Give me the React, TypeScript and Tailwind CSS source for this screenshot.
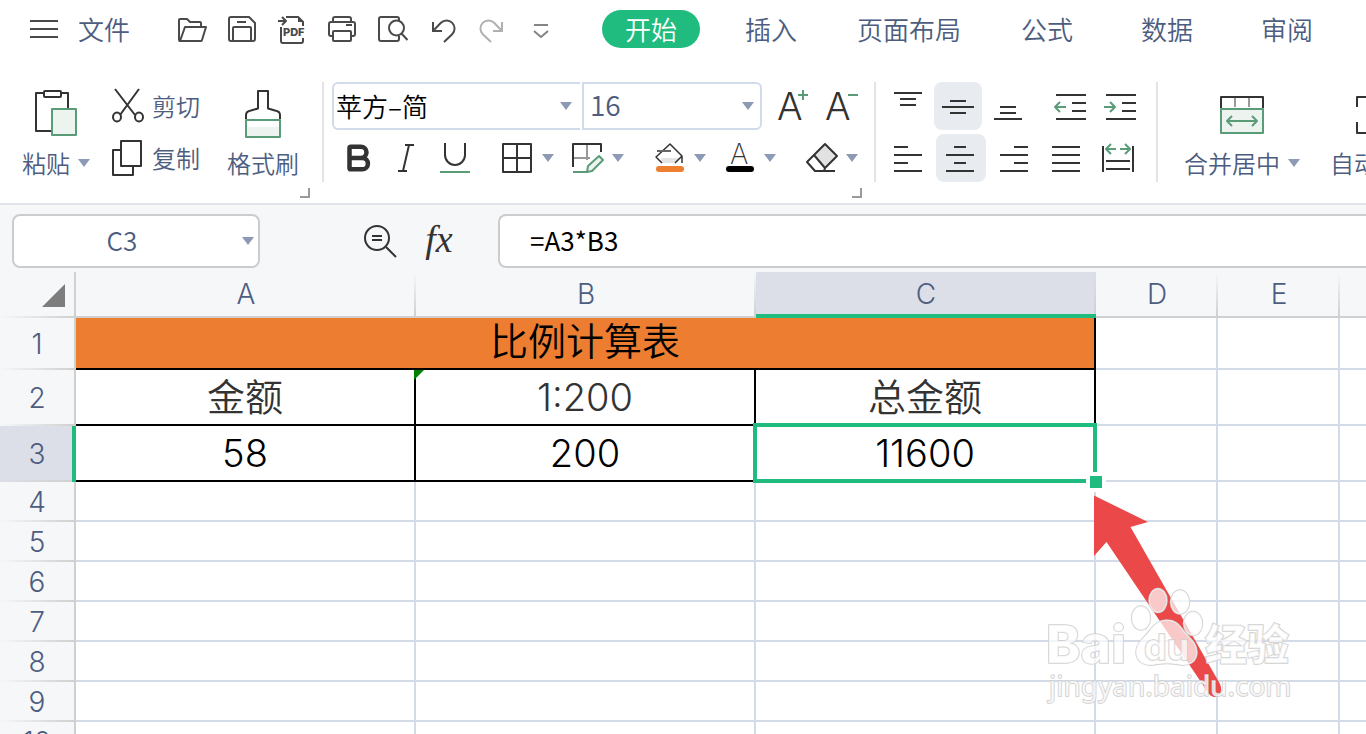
import type { ReactNode } from 'react';
import { Bold } from 'lucide-react';
import clsx from 'clsx';

const TABS = ['开始', '插入', '页面布局', '公式', '数据', '审阅'];
const COLUMNS = ['A', 'B', 'C', 'D', 'E', 'F'];
const EMPTY_ROWS = [4, 5, 6, 7, 8, 9, 10];

const INK = '#333333';
const GREEN = '#5a9c78';
const MINT = '#edf3ef';

interface IconProps {
  w?: number;
  h?: number;
  color?: string;
  children: ReactNode;
}

function Icon({ w = 32, h = 32, color = INK, children }: IconProps) {
  return (
    <svg
      width={w}
      height={h}
      viewBox={`0 0 ${w} ${h}`}
      fill="none"
      stroke={color}
      strokeWidth={2}
      strokeLinejoin="round"
      className="shrink-0 overflow-visible"
      aria-hidden="true"
    >
      {children}
    </svg>
  );
}

function Caret() {
  return (
    <svg width="12" height="8" viewBox="0 0 12 8" className="shrink-0" aria-hidden="true">
      <path d="M0 0h12L6 8z" fill="#8d9ab6" />
    </svg>
  );
}

function Divider() {
  return <div className="w-0.5 h-[100px] shrink-0 bg-[#e4e4e6]" />;
}

function GroupCorner() {
  return (
    <span className="absolute right-3 -bottom-4 size-2.5 border-r-2 border-b-2 border-[#9a9a9a]" />
  );
}

interface ToolProps {
  label: string;
  caret?: boolean;
  children: ReactNode;
}

function Tool({ label, caret, children }: ToolProps) {
  return (
    <button type="button" aria-label={label} className="flex items-center gap-2 h-12 shrink-0">
      <span className="flex w-8 items-center justify-center">{children}</span>
      {caret && <Caret />}
    </button>
  );
}

function BigTool({ label, caret, children }: ToolProps) {
  return (
    <button type="button" className="flex flex-col items-center gap-3 pt-1.5 shrink-0">
      {children}
      <span className="flex items-center gap-2 text-2xl leading-[26px] whitespace-nowrap">
        {label}
        {caret && <Caret />}
      </span>
    </button>
  );
}

interface AlignToolProps {
  label: string;
  active?: boolean;
  wide?: boolean;
  children: ReactNode;
}

function AlignTool({ label, active, wide, children }: AlignToolProps) {
  return (
    <button
      type="button"
      aria-label={label}
      className={clsx(
        'flex h-12 shrink-0 items-center justify-center rounded-lg',
        wide ? 'w-[50px]' : 'w-12',
        active && 'bg-[#e8ebf0]'
      )}
    >
      {children}
    </button>
  );
}

const undoPath = 'M7 9v9h9M7 18L14.9 9.8A8 8 0 1 1 26.2 21.2L18 29';

function TopBar() {
  return (
    <header className="flex h-[58px] items-center pl-[30px]">
      <button type="button" className="flex items-center gap-5 shrink-0 text-[26px] leading-8">
        <Icon w={28} h={20} color="#4a4a4a">
          <path d="M0 2h28M0 10h28M0 18h28" />
        </Icon>
        文件
      </button>

      <div className="flex gap-[18px] pl-[46px] shrink-0">
        <button type="button" aria-label="打开">
          <Icon color="#4a4a4a">
            <path d="M4 28a1 1 0 0 1-1-1V7a1 1 0 0 1 1-1h7l3 3h10a1 1 0 0 1 1 1v4" />
            <path d="M9 14h21l-4 13a1 1 0 0 1-1 1H4z" />
          </Icon>
        </button>
        <button type="button" aria-label="保存">
          <Icon color="#4a4a4a">
            <path d="M5 4h18l6 6v16a2 2 0 0 1-2 2H5a2 2 0 0 1-2-2V6a2 2 0 0 1 2-2z" />
            <path d="M7 28V15a1 1 0 0 1 1-1h16a1 1 0 0 1 1 1v13M11 9h9" />
          </Icon>
        </button>
        <button type="button" aria-label="输出为PDF">
          <Icon color="#4a4a4a">
            <path d="M2 8h7M6 4l4 4-4 4M10 4h12l5 5v4M5 14v14a2 2 0 0 0 2 2h18a2 2 0 0 0 2-2v-3" />
            <path d="M22 3l6 6h-6z" fill="#4a4a4a" stroke="none" />
            <text x="7" y="23" fill="#4a4a4a" stroke="none" className="font-['Inter'] text-[11px] font-extrabold">
              PDF
            </text>
          </Icon>
        </button>
        <button type="button" aria-label="打印">
          <Icon color="#4a4a4a">
            <path d="M7 23H5a2 2 0 0 1-2-2V11a2 2 0 0 1 2-2h22a2 2 0 0 1 2 2v10a2 2 0 0 1-2 2h-2" />
            <path d="M7 9V6a2 2 0 0 1 2-2h14a2 2 0 0 1 2 2v3M20 12h6" />
            <rect x="7" y="18" width="18" height="10" rx="1" />
          </Icon>
        </button>
        <button type="button" aria-label="打印预览">
          <Icon color="#4a4a4a">
            <path d="M23 8V6a2 2 0 0 0-2-2H5a2 2 0 0 0-2 2v20a2 2 0 0 0 2 2h16a2 2 0 0 0 2-2v-3" />
            <circle cx="20.5" cy="15" r="7.5" />
            <path d="M25.5 20.5l6 6.5" />
          </Icon>
        </button>
        <button type="button" aria-label="撤销">
          <Icon color="#4a4a4a">
            <path d={undoPath} strokeLinejoin="miter" />
          </Icon>
        </button>
        <button type="button" aria-label="恢复">
          <Icon color="#b0b0b0">
            <path d={undoPath} strokeLinejoin="miter" transform="translate(33 0) scale(-1 1)" />
          </Icon>
        </button>
        <button type="button" aria-label="自定义快速访问工具栏">
          <Icon color="#858585">
            <path d="M8 12h14M8 18l7 6 7-6" />
          </Icon>
        </button>
      </div>

      <nav className="flex items-center gap-[52px] pl-[59px] shrink-0">
        {TABS.map((tab, i) => (
          <button
            key={tab}
            type="button"
            className={clsx(
              'h-[38px] text-[26px] leading-8 whitespace-nowrap',
              i === 0 && 'bg-[#20bb7e] text-white rounded-full px-[23px] -mx-[15px]',
              i > 0 && tab.length === 2 && 'w-[68px]'
            )}
          >
            {tab}
          </button>
        ))}
      </nav>
    </header>
  );
}

function ClipboardGroup() {
  return (
    <div className="relative flex shrink-0 pl-[22px] pr-[23px]">
      <BigTool label="粘贴" caret>
        <Icon w={44} h={50}>
          <path d="M11 5H2v38h15M27 5h7v15" />
          <rect x="10" y="3" width="17" height="6" rx="1" />
          <rect x="18" y="21" width="24" height="26" fill={MINT} stroke={GREEN} />
        </Icon>
      </BigTool>
      <div className="flex flex-col gap-1 pl-[22px] pr-[27px]">
        <button type="button" className="flex h-12 items-center gap-2 text-2xl">
          <Icon h={36}>
            <path d="M3 1l20 26M27 1L8 27" />
            <ellipse cx="5" cy="29" rx="4" ry="4.5" />
            <ellipse cx="27" cy="29" rx="4" ry="4.5" />
          </Icon>
          剪切
        </button>
        <button type="button" className="flex h-12 items-center gap-2 text-2xl">
          <Icon h={36}>
            <path d="M9 10H1v25h20v-8" />
            <rect x="9" y="1" width="20" height="25" />
          </Icon>
          复制
        </button>
      </div>
      <BigTool label="格式刷">
        <Icon w={36} h={50}>
          <path d="M1 31v-4c0-3 2-4 5-4.500l7-2V3h10v17.500l7 2c3 .5 5 1.500 5 4.500v4" />
          <path d="M2 39h32v9H2z" fill={MINT} stroke="none" />
          <rect x="1" y="32" width="34" height="17" stroke={GREEN} />
        </Icon>
      </BigTool>
      <GroupCorner />
    </div>
  );
}

function FontGroup() {
  return (
    <div className="relative flex shrink-0 flex-col gap-1 pl-2 pr-4">
      <div className="flex items-center gap-4">
        <div className="flex gap-0.5">
          <div className="relative">
            <select
              aria-label="字体"
              className="h-12 w-[248px] appearance-none rounded-l-md border-2 border-r-0 border-[#d2dbea] bg-white pl-0.5 text-[26px] leading-10 text-black"
            >
              <option>苹方–简</option>
            </select>
            <span className="pointer-events-none absolute inset-y-0 right-2 flex items-center">
              <Caret />
            </span>
          </div>
          <div className="relative">
            <select
              aria-label="字号"
              className="h-12 w-[180px] appearance-none rounded-r-md border-2 border-[#d2dbea] bg-white pl-1.5 pb-1 text-[28px] leading-10"
            >
              <option>16</option>
            </select>
            <span className="pointer-events-none absolute inset-y-0 right-2 flex items-center">
              <Caret />
            </span>
          </div>
        </div>
        <Tool label="增大字号">
          <Icon h={36}>
            <text x="-1" y="32" fill={INK} stroke="none" className="font-['Inter'] text-[38px] font-light">
              A
            </text>
            <path d="M20 7h10M25 2v10" stroke={GREEN} />
          </Icon>
        </Tool>
        <Tool label="减小字号">
          <Icon h={36}>
            <text x="-1" y="32" fill={INK} stroke="none" className="font-['Inter'] text-[38px] font-light">
              A
            </text>
            <path d="M22 7h10" stroke={GREEN} />
          </Icon>
        </Tool>
      </div>

      <div className="flex items-center gap-[30px] pl-2.5">
        <div className="flex gap-[17px]">
          <Tool label="加粗">
            <Bold size={34} strokeWidth={3.2} color={INK} className="shrink-0" />
          </Tool>
          <Tool label="倾斜">
            <Icon>
              <path d="M14 3h9M7 29h9M18 3l-6 26" />
            </Icon>
          </Tool>
          <Tool label="下划线">
            <Icon>
              <path d="M5 1v12a10 10 0 0 0 20 0V1" />
              <path d="M0 30h30" stroke={GREEN} />
            </Icon>
          </Tool>
        </div>
        <div className="flex gap-[18px]">
          <Tool label="边框" caret>
            <Icon>
              <path d="M1 2h28v28H1zM15 2v28M1 16h28" />
            </Icon>
          </Tool>
          <Tool label="绘制边框" caret>
            <Icon>
              <path d="M15 2v16M1 16h17" stroke="#999999" />
              <path d="M1 25V2h28v8" />
              <path d="M1 30h14" stroke={GREEN} />
              <path d="M15 30l1-6 11-10 4 4-11 11z" fill={MINT} stroke={GREEN} />
            </Icon>
          </Tool>
        </div>
        <div className="flex gap-[18px]">
          <Tool label="填充颜色" caret>
            <Icon>
              <path d="M7 16h19l-4 5H8z" fill="#e4e4e4" stroke="none" />
              <path d="M8 21l-6-6L16 2l12 12-7 7M28 14v7" strokeWidth={1.5} />
              <path d="M3 9h14" stroke="#666666" />
              <rect x="2" y="24" width="28" height="6" rx="3" fill="#ee7e30" stroke="none" />
            </Icon>
          </Tool>
          <Tool label="字体颜色" caret>
            <Icon>
              <text x="6" y="22" fill={INK} stroke="none" className="font-['Inter'] text-[28px] font-extralight">
                A
              </text>
              <rect x="2" y="24" width="28" height="6" rx="3" fill="#000000" stroke="none" />
            </Icon>
          </Tool>
        </div>
        <Tool label="清除" caret>
          <Icon>
            <path d="M8 13L19 2l12 12-12 12z" fill="#e2e2e2" />
            <path d="M8 13l-7 7 8 9h20M19 26l-1 3" />
          </Icon>
        </Tool>
      </div>
      <GroupCorner />
    </div>
  );
}

function AlignGroup() {
  return (
    <div className="flex shrink-0 flex-col gap-1 pl-2 pr-3">
      <div className="flex gap-0.5">
        <AlignTool label="顶端对齐">
          <Icon>
            <path d="M2 3h28M8 9h16M8 15h16" />
          </Icon>
        </AlignTool>
        <AlignTool label="垂直居中" active>
          <Icon>
            <path d="M8 11h16M0 17h32M8 23h16" />
          </Icon>
        </AlignTool>
        <AlignTool label="底端对齐">
          <Icon>
            <path d="M8 17h16M8 23h16M2 29h28" />
          </Icon>
        </AlignTool>
        <div className="flex gap-0.5 pl-3">
          <AlignTool label="减少缩进">
            <Icon>
              <path d="M2 5h30M18 13h14M18 21h14M2 29h30" />
              <path d="M12 17H1M6 12l-5 5 5 5" stroke={GREEN} />
            </Icon>
          </AlignTool>
          <AlignTool label="增加缩进">
            <Icon>
              <path d="M2 5h30M18 13h14M18 21h14M2 29h30" />
              <path d="M0 17h11M6 12l5 5-5 5" stroke={GREEN} />
            </Icon>
          </AlignTool>
        </div>
      </div>
      <div className="flex gap-0.5">
        <AlignTool label="左对齐" wide>
          <Icon>
            <path d="M1 5h14M1 13h28M1 21h14M1 29h28" />
          </Icon>
        </AlignTool>
        <AlignTool label="水平居中" wide active>
          <Icon>
            <path d="M9 5h12M1 13h28M9 21h12M1 29h28" />
          </Icon>
        </AlignTool>
        <AlignTool label="右对齐" wide>
          <Icon>
            <path d="M17 5h14M3 13h28M17 21h14M3 29h28" />
          </Icon>
        </AlignTool>
        <AlignTool label="两端对齐" wide>
          <Icon>
            <path d="M3 5h28M3 13h28M3 21h28M3 29h28" />
          </Icon>
        </AlignTool>
        <AlignTool label="分散对齐" wide>
          <Icon>
            <path d="M2 4v26M32 4v26M5 19h24M5 27h24" />
            <path d="M15 7H6M10 2L5 7l5 5M19 7h9M24 2l5 5-5 5" stroke={GREEN} />
          </Icon>
        </AlignTool>
      </div>
    </div>
  );
}

function Ribbon() {
  return (
    <section className="flex items-start overflow-hidden border-b-2 border-[#e2e4ea] pt-6 pb-[21px]">
      <ClipboardGroup />
      <Divider />
      <FontGroup />
      <Divider />
      <AlignGroup />
      <Divider />
      <div className="flex shrink-0 gap-[30px] pl-[26px]">
        <BigTool label="合并居中" caret>
          <Icon w={44} h={50}>
            <path d="M15 9v10M29 9v10" stroke="#999999" />
            <path d="M1 20V9h42v11" />
            <rect x="1" y="21" width="42" height="24" fill={MINT} stroke={GREEN} />
            <path d="M7 33h30M12 28l-5 5 5 5M32 28l5 5-5 5" stroke={GREEN} />
          </Icon>
        </BigTool>
        <BigTool label="自动换行">
          <Icon w={44} h={50}>
            <path d="M11 9H1v10M33 9h10v10M1 34v11h10M43 34v11H33" />
          </Icon>
        </BigTool>
      </div>
    </section>
  );
}

function FormulaBar() {
  return (
    <section className="flex items-center pt-[9px] pb-1 pl-3">
      <div className="flex h-[54px] w-[248px] shrink-0 items-center rounded-lg border-2 border-[#cccccc] bg-white">
        <input
          aria-label="名称框"
          defaultValue="C3"
          className="h-full w-[216px] bg-transparent pb-1 text-center text-[26px] outline-none"
        />
        <button type="button" aria-label="选择名称" className="flex flex-1 items-center justify-end pr-1">
          <Caret />
        </button>
      </div>
      <div className="flex shrink-0 items-center gap-7 pl-[104px] pr-11">
        <button type="button" aria-label="查找">
          <Icon>
            <circle cx="13" cy="13" r="12" />
            <path d="M8 11h10M8 15h10M22 22l10 10" />
          </Icon>
        </button>
        <button
          type="button"
          aria-label="插入函数"
          className="w-[30px] pb-1 font-['Liberation_Serif'] text-[38px] leading-9 text-[#333333] italic"
        >
          fx
        </button>
      </div>
      <input
        aria-label="编辑栏"
        defaultValue="=A3*B3"
        className="h-[54px] min-w-0 flex-1 rounded-l-lg border-2 border-r-0 border-[#cccccc] bg-white pl-[30px] pb-1 text-[26px] font-normal text-black outline-none"
      />
    </section>
  );
}

function RowHeader({ row, active }: { row: number; active?: boolean }) {
  return (
    <th
      scope="row"
      className={clsx(
        'border-r-2 bg-[linear-gradient(to_right,transparent,#d0d0d0)] bg-[length:100%_2px] bg-bottom bg-no-repeat p-0 font-light',
        active
          ? 'border-[#20bb7e] bg-[#dcdfe8] shadow-[inset_-2px_0_#20bb7e]'
          : 'border-[#d0d0d0] bg-[#f6f7f9]'
      )}
    >
      {row}
    </th>
  );
}

function Blank({ count }: { count: number }) {
  return (
    <>
      {Array.from({ length: count }, (_, i) => (
        <td key={i} className="border-r-2 border-b-2 border-[#d3dbe9] bg-white" />
      ))}
    </>
  );
}

function Annotation() {
  return (
    <svg
      width="260"
      height="220"
      viewBox="0 0 260 220"
      className="pointer-events-none absolute top-[218px] left-[1040px] z-20"
      aria-hidden="true"
    >
      <path
        d="M54 5.500L108 32l-17.500 5L180 194c3 7 0 13-6 13-4-1-5-3-7-6L66.500 52 54 66z"
        fill="#eb4949"
      />
      <g fill="#ffffff" fillOpacity="0.7" stroke="#d0d0d0" strokeWidth="1.500" paintOrder="stroke">
        <ellipse cx="101" cy="128" rx="9.500" ry="12" />
        <ellipse cx="118" cy="110.500" rx="9" ry="12" />
        <ellipse cx="140" cy="112" rx="9.500" ry="12" />
        <ellipse cx="153" cy="133.500" rx="9.500" ry="12" />
        <path d="M127 130c8 0 12 4 16 10 5 7 14 12 14 22 0 9-7 14-16 13-9-2-19-2-28 0-10 1-17-4-17-13 0-10 9-15 14-22 4-6 9-10 17-10z" />
        <text x="6" y="173" className="font-['Inter'] text-[52px] font-extrabold">
          Bai
        </text>
        <text x="104" y="170" className="font-['Inter'] text-[36px] font-bold">
          du
        </text>
        <text x="165" y="170" className="font-['Noto_Sans_CJK_SC'] text-[42px] font-black">
          经验
        </text>
        <text x="9" y="206" className="font-['Noto_Sans'] text-[28px] font-normal">
          jingyan.baidu.com
        </text>
      </g>
    </svg>
  );
}

function Sheet() {
  return (
    <main className="relative min-h-0 flex-1 overflow-hidden">
      <table className="w-full min-w-[1462px] table-fixed border-separate border-spacing-0 text-center font-['Inter','Noto_Sans_CJK_SC',sans-serif] text-[38px] leading-none font-light text-black">
        <colgroup>
          <col className="w-[76px]" />
          <col className="w-[340px]" />
          <col className="w-[340px]" />
          <col className="w-[340px]" />
          <col className="w-[122px]" />
          <col className="w-[122px]" />
          <col />
        </colgroup>
        <thead className="text-[28px] text-[#4d5d80]">
          <tr className="h-[46px]">
            <th className="border-r-2 border-[#d0d0d0] bg-[#f6f7f9] bg-[linear-gradient(to_right,transparent,#d0d0d0)] bg-[length:100%_2px] bg-bottom bg-no-repeat p-0">
              <svg width="23" height="23" viewBox="0 0 23 23" className="ml-auto mr-[9px]" aria-hidden="true">
                <path d="M23 0v23H0z" fill="#7d7d7d" />
              </svg>
            </th>
            {COLUMNS.map((col) => (
              <th
                key={col}
                scope="col"
                className={clsx(
                  'border-b-2 bg-[linear-gradient(to_bottom,transparent,#d0d0d0)] bg-[length:2px_100%] bg-right bg-no-repeat p-0 font-light',
                  col === 'C'
                    ? 'border-[#20bb7e] bg-[#dcdfe8] shadow-[inset_0_-2px_#20bb7e]'
                    : 'border-[#d0d0d0] bg-[#f6f7f9]'
                )}
              >
                {col}
              </th>
            ))}
          </tr>
        </thead>
        <tbody className="[&_th]:text-[28px] [&_th]:text-[#4d5d80]">
          <tr className="h-[52px]">
            <RowHeader row={1} />
            <td colSpan={3} className="border-r-2 border-b-2 border-black bg-[#ed7d31] p-0 pb-1 font-[350]">
              比例计算表
            </td>
            <Blank count={3} />
          </tr>
          <tr className="h-14 text-[#333333]">
            <RowHeader row={2} />
            <td className="border-r-2 border-b-2 border-black bg-white p-0 font-[350]">金额</td>
            <td className="relative border-r-2 border-b-2 border-black bg-white p-0">
              <svg width="10" height="10" viewBox="0 0 10 10" className="absolute top-0 -left-0.5" aria-hidden="true">
                <path d="M0 0h10L0 10z" fill="#008000" />
              </svg>
              1:200
            </td>
            <td className="border-r-2 border-b-2 border-black bg-white p-0 font-[350]">总金额</td>
            <Blank count={3} />
          </tr>
          <tr className="h-14">
            <RowHeader row={3} active />
            <td className="border-r-2 border-b-2 border-black bg-white p-0">58</td>
            <td className="border-r-2 border-b-2 border-black bg-white p-0">200</td>
            <td className="relative border-r-2 border-b-2 border-[#d3dbe9] bg-white p-0">
              11600
              <span className="absolute -inset-[3px] z-10 border-4 border-[#20bb7e]" />
              <span className="absolute -right-3 -bottom-3 z-10 size-5 border-4 border-white bg-[#20bb7e]" />
            </td>
            <Blank count={3} />
          </tr>
          {EMPTY_ROWS.map((row) => (
            <tr key={row} className="h-10">
              <RowHeader row={row} />
              <Blank count={6} />
            </tr>
          ))}
        </tbody>
      </table>
      <Annotation />
    </main>
  );
}

export default function App() {
  return (
    <div className="flex h-screen flex-col overflow-hidden bg-[#f6f7f9] font-['Noto_Sans_CJK_SC',sans-serif] font-[350] text-[#4d5d80]">
      <div className="bg-white">
        <TopBar />
        <Ribbon />
      </div>
      <FormulaBar />
      <Sheet />
    </div>
  );
}
